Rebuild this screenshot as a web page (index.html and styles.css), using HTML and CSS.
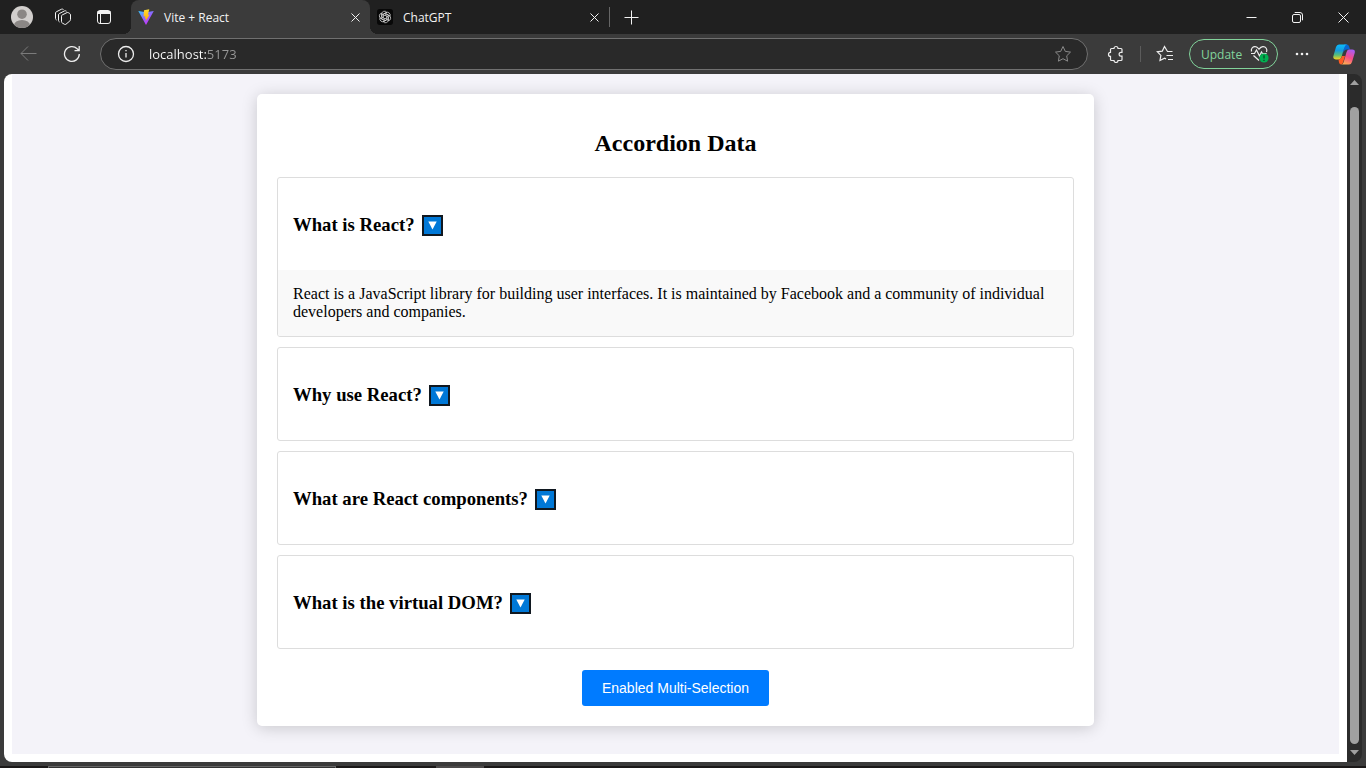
FILE: index.html
```html
<!DOCTYPE html>
<html lang="en">
<head>
<meta charset="utf-8">
<title>Vite + React</title>
<link rel="stylesheet" href="styles.css">
</head>
<body>
<div class="window">
  <header class="titlebar">
    <div class="titlebar-tools">
      <button class="tool" aria-label="Profile">
        <svg width="22" height="22" viewBox="0 0 22 22"><defs><clipPath id="avatar"><circle cx="11" cy="11" r="11"/></clipPath></defs><g clip-path="url(#avatar)"><rect width="22" height="22" fill="#d2cfcd"/><circle cx="11" cy="8.200" r="4.800" fill="#8b8785"/><ellipse cx="11" cy="19.500" rx="8" ry="5.600" fill="#8b8785"/></g></svg>
      </button>
      <button class="tool" aria-label="Workspaces">
        <svg class="line" width="18" height="18" viewBox="0 0 18 18"><path d="M7.500 8.200Q7.500 7.300 8.300 6.900L13 4.600Q13.700 4.300 14.400 4.700L15.700 5.500Q16.500 6 16.500 6.900V11.600Q16.500 12.400 15.900 12.900L12 16.200Q11.300 16.700 10.500 16.300L8.300 15Q7.500 14.500 7.500 13.700Z"/><path d="M5.500 14 4.900 13.500Q4.500 13.100 4.500 12.500V7Q4.500 6 5.300 5.600L10.500 2.900Q11.300 2.500 12.500 3.200"/><path d="M2.500 12 1.900 11.500Q1.500 11.100 1.500 10.500V5Q1.500 4.200 2.300 3.800L7.500 1.200Q8.300.8 9.500 1.500"/></svg>
      </button>
      <button class="tool" aria-label="Tab actions">
        <svg class="line" width="16" height="16" viewBox="0 0 16 16"><rect x="1.500" y="1.500" width="13" height="13" rx="2.500"/><path d="M1.500 3.500h13" stroke-width="3"/><path d="M4.500 4v10"/></svg>
      </button>
    </div>
    <nav class="tabs" aria-label="Tabs">
      <div class="tab tab-active">
        <svg width="16" height="16" viewBox="0 0 16 16"><defs><linearGradient id="vite" x1="0" y1="0" x2=".7" y2="1"><stop offset="0" stop-color="#35c9ff"/><stop offset=".55" stop-color="#9360ff"/><stop offset="1" stop-color="#d12cff"/></linearGradient><linearGradient id="bolt" x1="0" y1="0" x2="0" y2="1"><stop offset="0" stop-color="#ffdf35"/><stop offset="1" stop-color="#ffa600"/></linearGradient></defs><path fill="url(#vite)" d="M.3 2 8 15.900 15.800 2 8 3.300Z"/><path fill="url(#bolt)" d="M11.300.2 6 1.300 5.600 7.500 7.300 7.200 6.800 9.700 8.200 9.400 7.600 12.600 11.600 5.500 9.900 5.700Z"/></svg>
        <a class="tab-title" href="#">Vite + React</a>
        <button class="tab-close" aria-label="Close Vite + React"><svg class="line" width="9" height="9" viewBox="0 0 9 9"><path d="m.5.5 8 8m0-8-8 8"/></svg></button>
      </div>
      <div class="tab">
        <svg width="16" height="16" viewBox="0 0 24 24"><rect width="24" height="24" rx="4" fill="#080808"/><g transform="translate(12 12)" fill="none" stroke="#dedede" stroke-width="1.100"><g id="petals"><path id="petal" d="M-4.900 2.300V-4.500A4.200 4.200 0 0 1 2.600-7.100L-2.500-4.200V1.500"/><use href="#petal" transform="rotate(60)"/><use href="#petal" transform="rotate(120)"/></g><use href="#petals" transform="rotate(180)"/></g></svg>
        <a class="tab-title" href="#">ChatGPT</a>
        <button class="tab-close" aria-label="Close ChatGPT"><svg class="line" width="9" height="9" viewBox="0 0 9 9"><path d="m.5.5 8 8m0-8-8 8"/></svg></button>
      </div>
      <button class="new-tab" aria-label="New tab"><svg class="line" width="15" height="15" viewBox="0 0 15 15"><path d="M7.500.5v14M.5 7.500h14"/></svg></button>
    </nav>
    <div class="window-controls">
      <button aria-label="Minimize"><svg class="line" width="11" height="11" viewBox="0 0 11 11"><path d="M.5 5.500h10"/></svg></button>
      <button aria-label="Restore"><svg class="line" width="11" height="11" viewBox="0 0 11 11"><rect x=".5" y="2.500" width="8" height="8" rx="1.500"/><path d="M2.700.5H8a2.500 2.500 0 0 1 2.500 2.500v5.300"/></svg></button>
      <button aria-label="Close"><svg class="line" width="11" height="11" viewBox="0 0 11 11"><path d="m.5.5 10 10m0-10-10 10"/></svg></button>
    </div>
  </header>

  <div class="toolbar">
    <button class="nav-button nav-disabled" aria-label="Back"><svg class="line" width="17" height="16" viewBox="0 0 17 16"><path d="M16.500 7.500H1m7-7-7 7 7 7"/></svg></button>
    <button class="nav-button" aria-label="Refresh"><svg class="line" width="18" height="18" viewBox="0 0 18 18"><path stroke-width="1.300" d="M16.300 9A7.400 7.400 0 1 1 14.200 3.800L16 5.500M16.200 1v4.700h-4.700"/></svg></button>
    <div class="address">
      <svg class="line" width="18" height="18" viewBox="0 0 18 18"><circle cx="9" cy="9" r="7.500" stroke-width="1.300"/><path d="M9 8v4.500M9 5v1.300" stroke-width="1.300"/></svg>
      <input class="address-input" type="text" value="localhost:5173" aria-label="Address">
      <button class="icon-button muted" aria-label="Add to favorites"><svg class="line" width="18" height="18" viewBox="0 0 18 18"><path d="m9 1.500 2.300 4.900 5.200.7-3.800 3.700.9 5.400L9 13.700l-4.600 2.500.9-5.400L1.500 7.100l5.200-.7Z"/></svg></button>
    </div>
    <button class="extensions" aria-label="Extensions"><svg class="line" width="18" height="18" viewBox="0 0 18 18"><path stroke-width="1.200" d="M4.500 3.500H7A2 2 0 0 1 11 3.500H14Q15 3.500 15 4.500V7.400H14A1.800 1.800 0 0 0 14 11.200H15V14.500Q15 15.500 14 15.500H11A2 2 0 0 1 7 15.500H4.500Q3.500 15.500 3.500 14.500V11.400A2 2 0 0 1 3.500 7.400V4.500Q3.500 3.500 4.500 3.500Z"/></svg></button>
    <span class="toolbar-divider"></span>
    <button class="favorites" aria-label="Favorites"><svg class="line" width="18" height="18" viewBox="0 0 18 18"><path stroke-width="1.200" d="M16.500 6.500h-5L8.500 1.500 6.300 6.100l-5 .7 3.600 3.600-.9 5.100 4.500-2.400 1.500.8M10.500 10.500h6.500M12 14.500h5"/></svg></button>
    <button class="update">Update
      <svg width="19" height="18" viewBox="0 0 19 18"><path fill="none" stroke="#ededed" stroke-width="1.200" d="M1.500 6.500C.5 3 3.500 1.200 5.500 1.700c1.700.3 2.600 1.500 3.500 2.500 1-1.300 2-2.300 3.800-2.500 3-.2 4.900 2.600 3.700 5.300M1 8.500h3.500l2-3.500 3 6 2-4 1 1.500h4M3.500 10.500 9 15.500"/><circle cx="14" cy="13" r="4.600" fill="#00b050"/><path d="M14 10.300v3.300m0 1.100V16" stroke="#123b24" stroke-width="1.200"/></svg>
    </button>
    <button class="more" aria-label="Settings and more"><svg width="14" height="4" viewBox="0 0 14 4" fill="#f2f2f2"><circle cx="2" cy="2" r="1.300"/><circle cx="7" cy="2" r="1.300"/><circle cx="12" cy="2" r="1.300"/></svg></button>
    <button class="copilot" aria-label="Copilot">
      <svg width="22" height="21" viewBox="0 0 22 21"><defs><linearGradient id="cool" x1="0" y1="0" x2="0" y2="1"><stop offset="0" stop-color="#08bdff"/><stop offset=".4" stop-color="#189bdc"/><stop offset=".7" stop-color="#58bd78"/><stop offset="1" stop-color="#ffd21b"/></linearGradient><linearGradient id="warm" x1=".7" y1="0" x2=".3" y2="1"><stop offset="0" stop-color="#a85cf4"/><stop offset=".5" stop-color="#f64b88"/><stop offset="1" stop-color="#ffad4f"/></linearGradient></defs><path fill="#0867d3" d="M11 .5h2.800Q15.500.5 16 2.200L17 5.500h-3Q11 5.500 10 9Z"/><path fill="url(#cool)" d="M6 .5h8Q12 1 11.300 3.600L8.500 13Q7.600 15.500 5.500 15.500H2.800Q-.5 15.500.4 12L3 3Q3.800.5 6 .5Z"/><path fill="#ff5b22" d="M5.500 15.500Q8 15.500 9 12h3l-2 6.500Q9.500 20.500 8 20.500 6.500 20.500 6 18.500Z"/><path fill="url(#warm)" d="M16 5.500h3.200q3.300 0 2.500 3.500L19 18q-.8 2.500-3 2.500H8q2 0 2.700-2.500l2.700-9.500q.8-3 2.600-3Z"/></svg>
    </button>
  </div>

  <div class="viewport">
    <main class="page">
      <section class="page-background">
        <div class="accordion">
          <h2 class="accordion-title">Accordion Data</h2>
          <div class="accordion-list">
            <article class="item">
              <h3 class="item-header">What is React? <button class="toggle" aria-label="Toggle What is React?" aria-expanded="true"><svg width="9" height="9" viewBox="0 0 9 9"><path d="M.3.5h8.400L4.500 8.500Z" fill="#fff"/></svg></button></h3>
              <p class="item-content">React is a JavaScript library for building user interfaces. It is maintained by Facebook and a community of individual developers and companies.</p>
            </article>
            <article class="item">
              <h3 class="item-header">Why use React? <button class="toggle" aria-label="Toggle Why use React?" aria-expanded="false"><svg width="9" height="9" viewBox="0 0 9 9"><path d="M.3.5h8.400L4.500 8.500Z" fill="#fff"/></svg></button></h3>
            </article>
            <article class="item">
              <h3 class="item-header">What are React components? <button class="toggle" aria-label="Toggle What are React components?" aria-expanded="false"><svg width="9" height="9" viewBox="0 0 9 9"><path d="M.3.5h8.400L4.500 8.500Z" fill="#fff"/></svg></button></h3>
            </article>
            <article class="item">
              <h3 class="item-header">What is the virtual DOM? <button class="toggle" aria-label="Toggle What is the virtual DOM?" aria-expanded="false"><svg width="9" height="9" viewBox="0 0 9 9"><path d="M.3.5h8.400L4.500 8.500Z" fill="#fff"/></svg></button></h3>
            </article>
          </div>
          <button class="multi-button">Enabled Multi-Selection</button>
        </div>
      </section>
    </main>
    <div class="scrollbar">
      <svg width="9" height="5" viewBox="0 0 9 5"><path d="M0 5 4.500 0 9 5Z" fill="#a0a0a0"/></svg>
      <span class="scroll-thumb"></span>
      <svg width="9" height="5" viewBox="0 0 9 5"><path d="M0 0 4.500 5 9 0Z" fill="#a0a0a0"/></svg>
    </div>
  </div>
  <div class="taskbar"><span class="task-search"></span><span class="task-app"></span></div>
</div>
</body>
</html>
```

FILE: styles.css
```css
* { box-sizing: border-box; }
body { margin: 0; font-family: "Liberation Serif", serif; color: #000; }
button { border: 0; padding: 0; margin: 0; background: none; color: inherit; font: inherit; }
svg { display: block; flex: none; }
.line { fill: none; stroke: currentColor; }

.window { display: flex; flex-direction: column; height: 100vh; overflow: hidden; background: #3b3b3b; }

.titlebar { display: flex; flex: none; height: 34px; background: #202020; color: #f2f2f2; font: 12px "Open Sans", sans-serif; }
.titlebar-tools { display: flex; align-items: center; padding-left: 1px; width: 131px; }
.tool { display: grid; place-items: center; width: 41px; height: 34px; }
.tabs { display: flex; flex: 1; }
.tab { position: relative; display: flex; align-items: center; width: 239px; padding: 0 10px 0 7px; }
.tab-active { background: #3b3b3b; border-radius: 8px 8px 0 0; z-index: 1; }
.tab-active::before, .tab-active::after { content: ""; position: absolute; bottom: 0; width: 8px; height: 8px; }
.tab-active::before { right: 100%; background: radial-gradient(circle at 0 0, #202020 8px, #3b3b3b 8px); }
.tab-active::after { left: 100%; background: radial-gradient(circle at 100% 0, #202020 8px, #3b3b3b 8px); }
.tab-title { flex: 1; margin-left: 10px; color: inherit; text-decoration: none; }
.tab-close { display: grid; place-items: center; width: 10px; height: 20px; }
.new-tab { display: grid; place-items: center; align-self: center; width: 44px; height: 20px; border-left: 1px solid #666; }
.window-controls { display: flex; }
.window-controls button { display: grid; place-items: center; width: 46px; }

.toolbar { display: flex; align-items: center; flex: none; height: 40px; padding: 0 2px 0 6px; color: #ededed; font: 12px "Open Sans", sans-serif; }
.nav-button { display: grid; place-items: center; width: 44px; height: 32px; }
.nav-disabled { color: #7b7b7b; }
.address { display: flex; flex: 1; align-items: center; margin-left: 6px; height: 32px; padding: 0 15px 0 16px; border: 1px solid #707070; border-radius: 16px; background: #292929; }
.address-input { flex: 1; min-width: 0; margin-left: 14px; padding: 0; border: 0; outline: 0; font: 13px "Open Sans", sans-serif; color: transparent; background: linear-gradient(90deg, #fff 57px, #999 57px); -webkit-background-clip: text; background-clip: text; }
.icon-button { display: grid; place-items: center; }
.muted { color: #8a8a8a; }
.extensions { display: grid; place-items: center; width: 52px; height: 32px; padding-left: 4px; }
.toolbar-divider { width: 1px; height: 16px; background: #5c5c5c; }
.favorites { display: grid; place-items: center; width: 48px; height: 32px; }
.update { display: flex; align-items: center; justify-content: space-between; width: 89px; height: 30px; padding: 0 8px 0 11px; border: 1px solid #82d49b; border-radius: 16px; color: #82d49b; }
.more { display: grid; place-items: center; width: 48px; height: 32px; }
.copilot { display: grid; place-items: center; width: 40px; height: 32px; margin-left: -2px; }

.viewport { display: flex; flex: 1; min-height: 0; margin: 0 4px 4px; border-radius: 8px; overflow: hidden; }
.page { display: flex; flex: 1; min-width: 0; padding: 0 8px 8px; background: #fff; }
.page-background { flex: 1; padding: 20px; background: #f4f3f9; }
.accordion { max-width: 837px; margin: 0 auto; padding: 20px; border-radius: 5px; background: #fff; box-shadow: 0 2px 16px rgba(0, 0, 0, .18); text-align: center; }
.accordion-title { margin: 15px 0 20px; font-size: 24px; line-height: 28px; }
.accordion-list { display: grid; gap: 10px; margin-bottom: 21px; text-align: left; }
.item { border: 1px solid #ddd; border-radius: 3px; overflow: hidden; }
.item-header { display: flex; align-items: center; gap: 7px; height: 92px; margin: 0; padding: 2px 15px 0; line-height: 22px; }
.toggle { display: grid; place-items: center; width: 21px; height: 21px; border: 2px solid #101820; background: #0078d7; }
.item-content { margin: 0; padding: 15px; background: #f9f9f9; font-size: 16px; line-height: 18px; }
.multi-button { height: 36px; padding: 0 20px; border-radius: 3px; background: #007bff; color: #fff; font: 14px "Liberation Sans", sans-serif; display: block; margin: 0 auto; }

.scrollbar { display: flex; flex-direction: column; align-items: center; justify-content: space-between; width: 15px; padding: 6px 0 7px; background: #2b2b2b; }
.scroll-thumb { flex: 1; width: 9px; margin: 22px 0 6px; border-radius: 5px; background: #a0a0a0; }

.taskbar { display: flex; flex: none; height: 2px; padding-left: 48px; background: #1a1818; }
.task-search { width: 288px; border: 1px solid #666; border-bottom: 0; background: #333; }
.task-app { width: 48px; margin-left: 100px; background: #4c4a4a; }
```
